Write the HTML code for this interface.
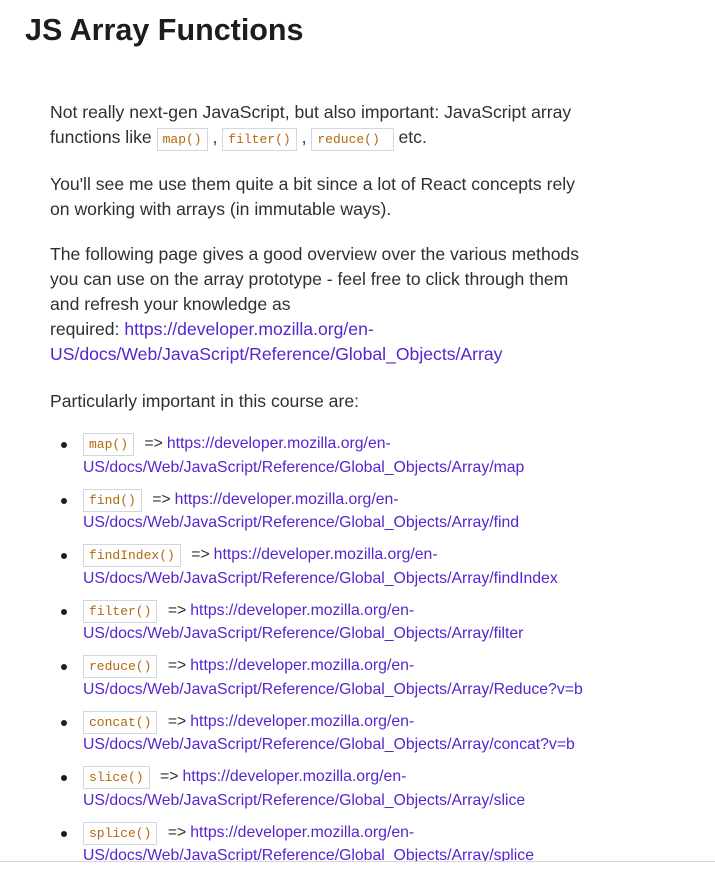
<!DOCTYPE html>
<html><head><meta charset="utf-8"><style>
body{margin:0;background:#fff;width:715px;height:874px;overflow:hidden;position:relative;font-family:"Liberation Sans",sans-serif;color:#333}
h1{position:absolute;left:25px;top:13px;margin:0;font-size:30.5px;font-weight:bold;color:#1c1d1f;letter-spacing:0px}
.p{position:absolute;left:50px;font-size:17.6px;line-height:25px;white-space:nowrap;color:#2d2f31}
a{color:#5624d0;text-decoration:none}
code{font-family:"Liberation Mono",monospace;font-size:13px;color:#b4690e;border:1px solid #d1d7dc;padding:3px 5px;background:#fff}
ul{position:absolute;left:0;top:433px;margin:0;padding:0;list-style:none}
li{position:relative;left:83px;font-size:15.8px;line-height:22.5px;height:55.5px;white-space:nowrap;color:#2d2f31}
li:before{content:"";position:absolute;left:-22px;top:9px;width:6px;height:6px;border-radius:50%;background:#1c1d1f}
.ar{margin:0 4px 0 6px}
.hr{position:absolute;left:0;top:861px;width:715px;height:1px;background:#d1d7dc}
</style></head><body>
<h1>JS Array Functions</h1>
<div class="p" style="top:100px">Not really next-gen JavaScript, but also important: JavaScript array<br>functions like <code>map()</code> , <code>filter()</code> , <code>reduce()&nbsp;</code> etc.</div>
<div class="p" style="top:172px">You'll see me use them quite a bit since a lot of React concepts rely<br>on working with arrays (in immutable ways).</div>
<div class="p" style="top:242px">The following page gives a good overview over the various methods<br>you can use on the array prototype - feel free to click through them<br>and refresh your knowledge as<br>required: <a>https://developer.mozilla.org/en-</a><br><a>US/docs/Web/JavaScript/Reference/Global_Objects/Array</a></div>
<div class="p" style="top:389px">Particularly important in this course are:</div>
<ul>
<li><code>map()</code> <span class="ar">=&gt;</span><a>https://developer.mozilla.org/en-</a><br><a>US/docs/Web/JavaScript/Reference/Global_Objects/Array/map</a></li>
<li><code>find()</code> <span class="ar">=&gt;</span><a>https://developer.mozilla.org/en-</a><br><a>US/docs/Web/JavaScript/Reference/Global_Objects/Array/find</a></li>
<li><code>findIndex()</code> <span class="ar">=&gt;</span><a>https://developer.mozilla.org/en-</a><br><a>US/docs/Web/JavaScript/Reference/Global_Objects/Array/findIndex</a></li>
<li><code>filter()</code> <span class="ar">=&gt;</span><a>https://developer.mozilla.org/en-</a><br><a>US/docs/Web/JavaScript/Reference/Global_Objects/Array/filter</a></li>
<li><code>reduce()</code> <span class="ar">=&gt;</span><a>https://developer.mozilla.org/en-</a><br><a>US/docs/Web/JavaScript/Reference/Global_Objects/Array/Reduce?v=b</a></li>
<li><code>concat()</code> <span class="ar">=&gt;</span><a>https://developer.mozilla.org/en-</a><br><a>US/docs/Web/JavaScript/Reference/Global_Objects/Array/concat?v=b</a></li>
<li><code>slice()</code> <span class="ar">=&gt;</span><a>https://developer.mozilla.org/en-</a><br><a>US/docs/Web/JavaScript/Reference/Global_Objects/Array/slice</a></li>
<li><code>splice()</code> <span class="ar">=&gt;</span><a>https://developer.mozilla.org/en-</a><br><a>US/docs/Web/JavaScript/Reference/Global_Objects/Array/splice</a></li>
</ul>
<div class="hr"></div>
<div style="position:absolute;left:0;top:862px;width:715px;height:12px;background:#fff"></div>
</body></html>
